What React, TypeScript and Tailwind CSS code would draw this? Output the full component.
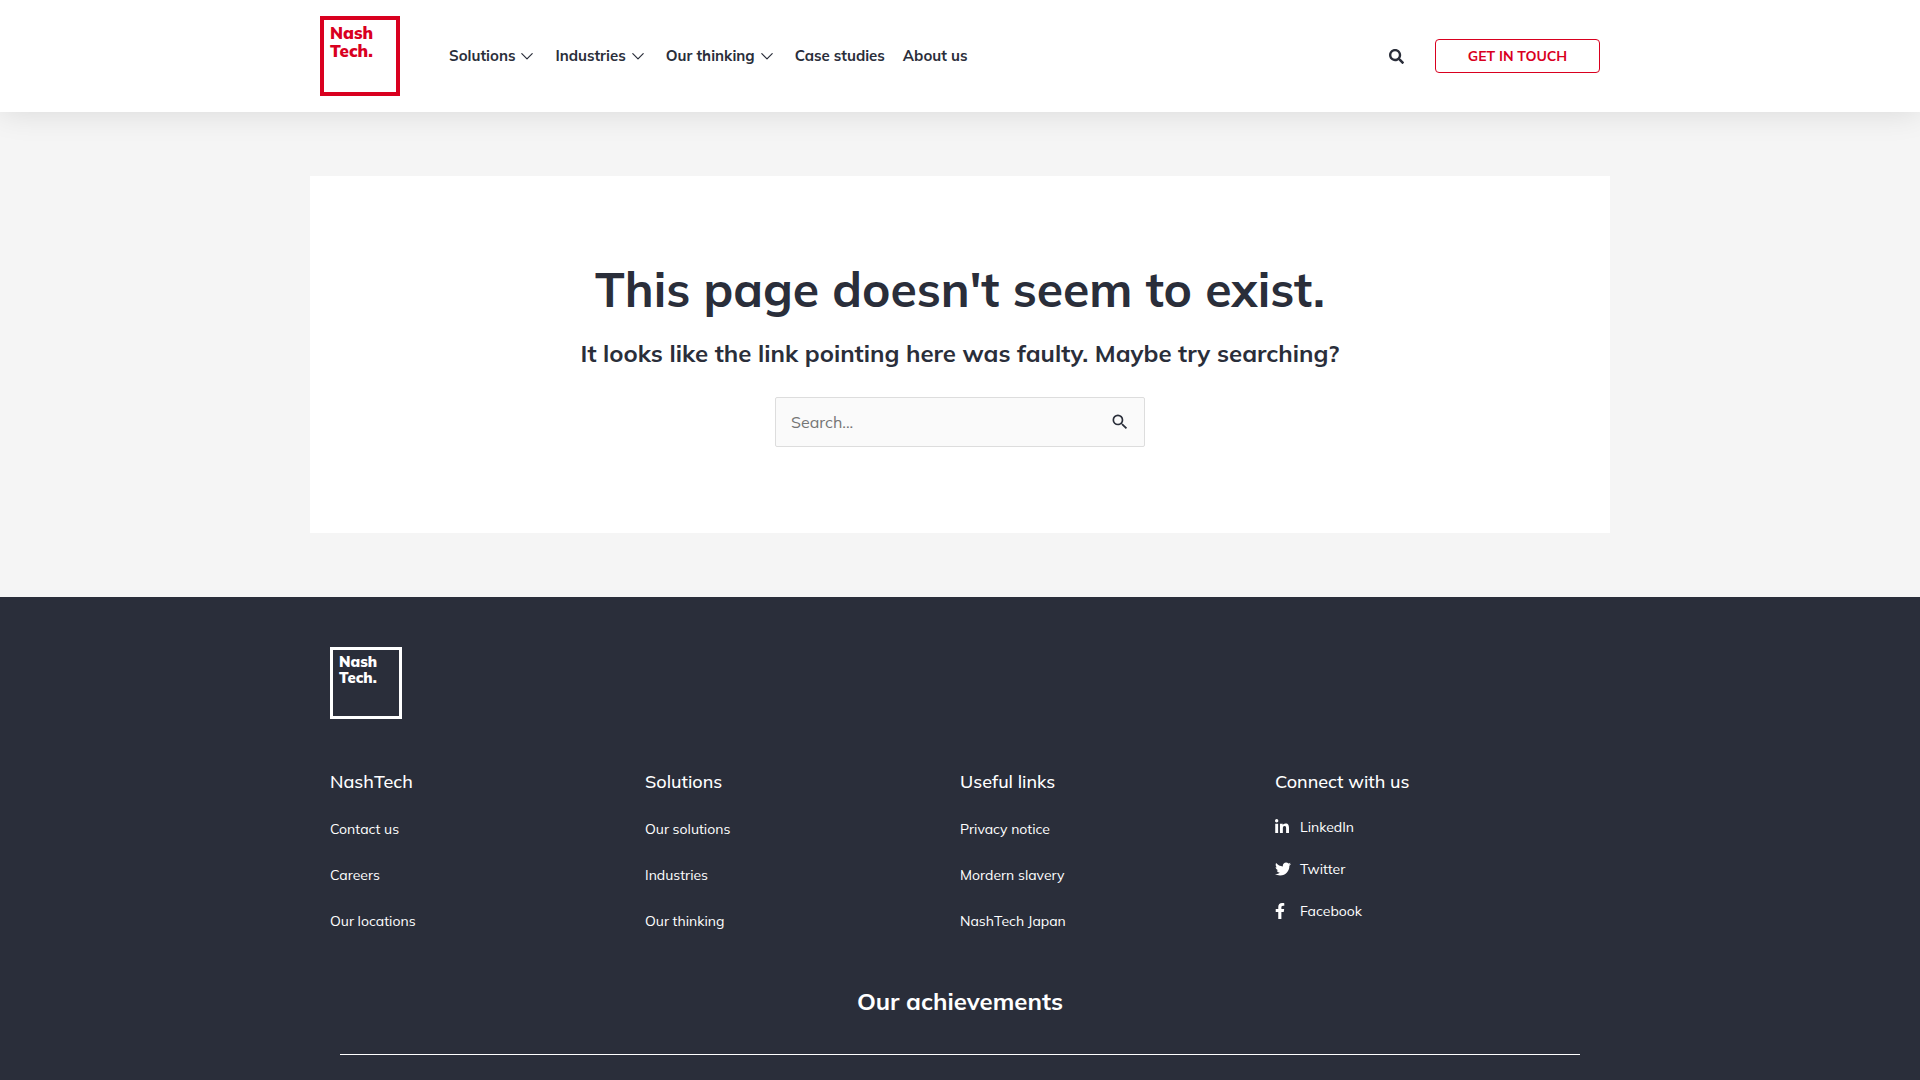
import React from "react";
import { FaFacebookF, FaLinkedinIn, FaSearch, FaTwitter } from "react-icons/fa";
import { MdSearch } from "react-icons/md";

type NavItem = { label: string; hasMenu: boolean };

const navItems: NavItem[] = [
  { label: "Solutions", hasMenu: true },
  { label: "Industries", hasMenu: true },
  { label: "Our thinking", hasMenu: true },
  { label: "Case studies", hasMenu: false },
  { label: "About us", hasMenu: false },
];

const footerColumns = [
  { title: "NashTech", links: ["Contact us", "Careers", "Our locations"] },
  { title: "Solutions", links: ["Our solutions", "Industries", "Our thinking"] },
  { title: "Useful links", links: ["Privacy notice", "Mordern slavery", "NashTech Japan"] },
];

const socialLinks = [
  { label: "LinkedIn", Icon: FaLinkedinIn },
  { label: "Twitter", Icon: FaTwitter },
  { label: "Facebook", Icon: FaFacebookF },
];

function Chevron() {
  return (
    <svg className="size-3" viewBox="0 0 12 12" fill="none" stroke="currentColor" strokeWidth="1.2" aria-hidden="true">
      <path d="M0.8 3.6 6 8.8 11.2 3.6" strokeLinecap="round" strokeLinejoin="round" />
    </svg>
  );
}

function Header() {
  return (
    <header className="relative bg-white shadow-[0_0_30px_rgba(0,0,0,0.12)]">
      <div className="mx-auto flex h-28 max-w-[1280px] items-center">
        <a
          href="#"
          aria-label="NashTech home"
          className="block size-20 border-4 border-[#d9001f] px-[6px] pt-1 text-[17px] leading-[18px] font-black text-[#d9001f]"
        >
          Nash
          <br />
          Tech.
        </a>
        <nav className="ml-[49px] flex text-[15px] font-bold">
          {navItems.map((item) => (
            <a
              key={item.label}
              href="#"
              className={item.hasMenu ? "mr-[22px] flex items-center gap-[6px]" : "mr-[18px] flex items-center"}
            >
              {item.label}
              {item.hasMenu && <Chevron />}
            </a>
          ))}
        </nav>
        <button type="button" aria-label="Search" className="ml-auto">
          <FaSearch className="size-[15px]" />
        </button>
        <a
          href="#"
          className="ml-[31px] flex h-[34px] w-[165px] items-center justify-center rounded border border-[#d9001f] text-[14px] font-bold text-[#d9001f]"
        >
          GET IN TOUCH
        </a>
      </div>
    </header>
  );
}

function NotFound() {
  return (
    <main className="bg-[#f5f5f5] py-16">
      <section className="mx-auto max-w-[1300px] bg-white pt-20 pb-[86px] text-center">
        <h1 className="text-[48px] leading-[66px] font-bold">This page doesn't seem to exist.</h1>
        <p className="mt-[14px] text-[24px] leading-[34px] font-bold">
          It looks like the link pointing here was faulty. Maybe try searching?
        </p>
        <form
          role="search"
          className="mx-auto mt-[27px] flex h-[50px] w-[370px] items-center rounded-xs border border-[#dddddd] bg-[#fafafa]"
        >
          <input
            type="search"
            aria-label="Search"
            placeholder="Search..."
            className="min-w-0 flex-1 bg-transparent pl-[15px] text-[16px] outline-none placeholder:text-[#757575]"
          />
          <button type="submit" aria-label="Submit search" className="mr-[14px]">
            <MdSearch className="size-5" />
          </button>
        </form>
      </section>
    </main>
  );
}

function Footer() {
  return (
    <footer className="grow bg-[#2a2e3a] pt-[50px] pb-6 text-white">
      <div className="mx-auto max-w-[1260px]">
        <a
          href="#"
          aria-label="NashTech home"
          className="block size-[72px] border-[3px] border-white px-[6px] pt-1 text-[15px] leading-4 font-black"
        >
          Nash
          <br />
          Tech.
        </a>
        <div className="mt-[50px] grid grid-cols-4">
          {footerColumns.map((column) => (
            <div key={column.title}>
              <h2 className="text-[18px] leading-[26px] font-medium">{column.title}</h2>
              <ul className="mt-6 flex flex-col gap-[26px] text-[14px] leading-5">
                {column.links.map((link) => (
                  <li key={link}>
                    <a href="#">{link}</a>
                  </li>
                ))}
              </ul>
            </div>
          ))}
          <div>
            <h2 className="text-[18px] leading-[26px] font-medium">Connect with us</h2>
            <ul className="mt-[22px] flex flex-col gap-[22px] text-[14px] leading-5">
              {socialLinks.map(({ label, Icon }) => (
                <li key={label}>
                  <a href="#" className="flex items-center">
                    <span className="w-[25px]">
                      <Icon className="size-4" preserveAspectRatio="xMinYMid meet" />
                    </span>
                    {label}
                  </a>
                </li>
              ))}
            </ul>
          </div>
        </div>
        <h2 className="mt-[53px] text-center text-[24px] leading-[34px] font-bold">Our achievements</h2>
        <hr className="mx-[10px] mt-9 border-white" />
      </div>
    </footer>
  );
}

export default function App() {
  return (
    <div className="flex min-h-screen flex-col bg-[#2a2e3a] font-['Mulish','Open_Sans',sans-serif] text-[#2a2e3a]">
      <Header />
      <NotFound />
      <Footer />
    </div>
  );
}
